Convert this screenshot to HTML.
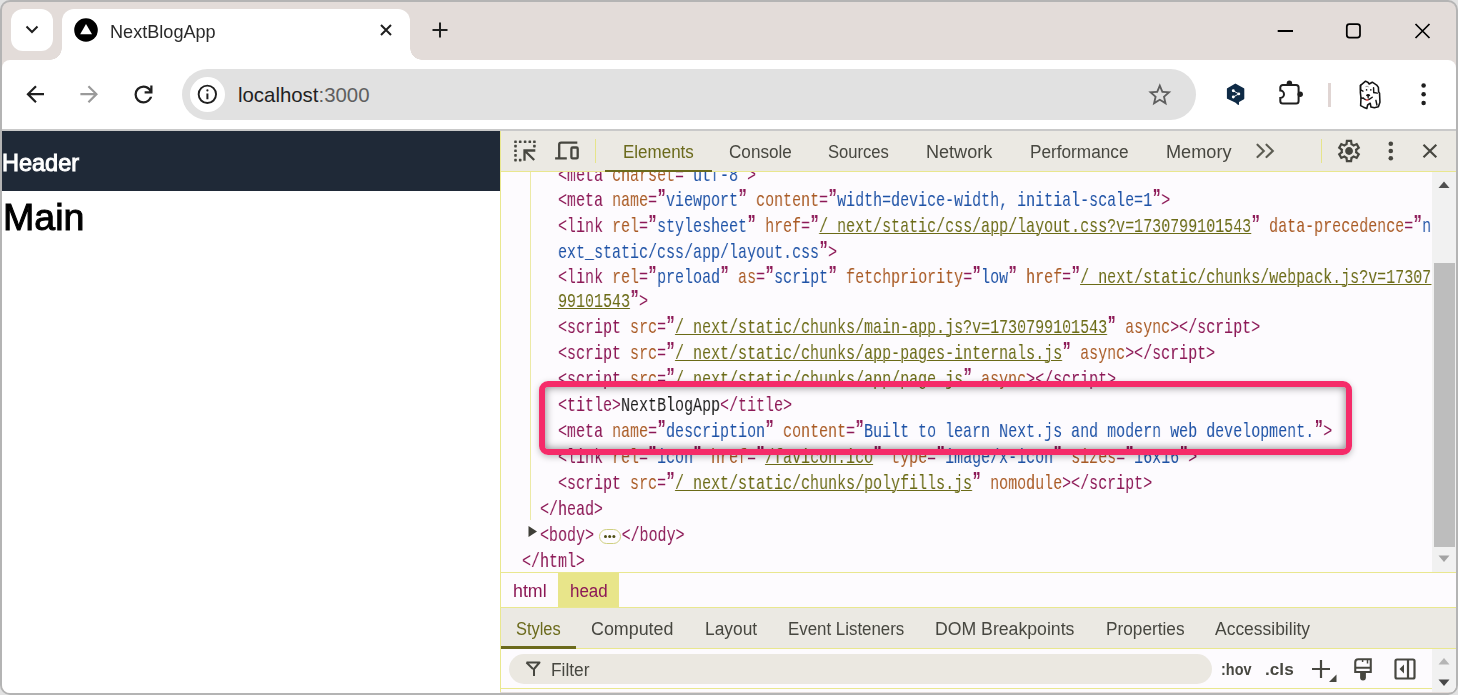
<!DOCTYPE html>
<html><head><meta charset="utf-8">
<style>
*{box-sizing:border-box;margin:0;padding:0}
html,body{width:1458px;height:695px;overflow:hidden;background:#e2e2e2;font-family:"Liberation Sans",sans-serif}
.a{position:absolute}
#win{position:absolute;left:2px;top:2px;width:1454px;height:691px;border-radius:8px;overflow:hidden;background:#e3dcd9}
svg{position:absolute;overflow:visible}
.tt{position:absolute;white-space:pre;line-height:1}
.lb{position:absolute;white-space:pre;line-height:1;transform-origin:0 0}
/* code */
#tree{position:absolute;left:501px;top:172px;width:931px;height:400px;background:#fdfbfe;overflow:hidden}
.ln{position:absolute;left:0;height:26px;will-change:transform;white-space:pre;font-family:"Liberation Mono",monospace;font-size:21px;line-height:26px;transform:scaleX(0.7143);transform-origin:0 0}
.tg{color:#8c1856}.an{color:#a95a24}.av{color:#1e52a6}.lk{color:#6b6b17;text-decoration:underline;text-decoration-thickness:1px;text-underline-offset:0.5px}.tx{color:#1c1c1c}
.q{font-weight:bold;font-family:"Liberation Sans",sans-serif;display:inline-block;width:12.6px;text-align:center;font-size:23px;line-height:0}
.el{display:inline-block;width:38.5px;height:1px}
</style></head><body>
<div class="a" style="left:0;top:0;width:1458px;height:695px;border-radius:10px;background:#b4b4b4"></div>
<div id="win">
  <!-- tab strip -->
  <div class="a" style="left:9px;top:7px;width:42px;height:42px;border-radius:12px;background:#fff"></div>
  <svg style="left:18px;top:18px" width="24" height="24"><path d="M6.5 6.5 L12 12 L17.5 6.5" fill="none" stroke="#1f1f1f" stroke-width="2"/></svg>
  <div class="a" style="left:60px;top:7px;width:348px;height:60px;border-radius:12px 12px 0 0;background:#fff"></div>
  <div class="a" style="left:48px;top:46px;width:12px;height:12px;background:radial-gradient(circle at 0 0,#e3dcd9 11.5px,#fff 12px)"></div>
  <div class="a" style="left:408px;top:46px;width:12px;height:12px;background:radial-gradient(circle at 100% 0,#e3dcd9 11.5px,#fff 12px)"></div>
  <svg style="left:72px;top:16px" width="24" height="24"><circle cx="12" cy="12" r="11.8" fill="#000"/><path d="M12 5.9 L18 16.2 L6.2 16.2 Z" fill="#fff"/></svg>
  <svg style="left:372px;top:16px" width="24" height="24"><path d="M7 7 L17 17 M17 7 L7 17" stroke="#1f1f1f" stroke-width="2"/></svg>
  <svg style="left:426px;top:16px" width="24" height="24"><path d="M12 4.5 V19.5 M4.5 12 H19.5" stroke="#1f1f1f" stroke-width="2"/></svg>
  <!-- window controls -->
  <svg style="left:1268px;top:16px" width="30" height="30"><path d="M7.7 13 H23" stroke="#000" stroke-width="1.8"/></svg>
  <svg style="left:1338px;top:16px" width="30" height="30"><rect x="6.8" y="6.2" width="13.2" height="13.3" rx="2.6" fill="none" stroke="#000" stroke-width="1.75"/></svg>
  <svg style="left:1408px;top:16px" width="30" height="30"><path d="M5.5 6 L19.5 20 M19.5 6 L5.5 20" stroke="#000" stroke-width="1.75"/></svg>

  <!-- toolbar -->
  <div class="a" style="left:0;top:58px;width:1454px;height:71px;border-radius:8px 8px 0 0;background:#fff"></div>
  <svg style="left:19.8px;top:79px" width="26.4" height="26.4" viewBox="0 0 24 24"><path d="M20 11H7.83l5.59-5.59L12 4l-8 8 8 8 1.41-1.41L7.83 13H20v-2z" fill="#1f1f1f"/></svg>
  <svg style="left:73.8px;top:79px" width="26.4" height="26.4" viewBox="0 0 24 24"><path d="M12 4l-1.41 1.41L16.17 11H4v2h12.17l-5.58 5.59L12 20l8-8z" fill="#9a9a9a"/></svg>
  <svg style="left:127.5px;top:78.85px" width="27" height="27" viewBox="0 -960 960 960"><path d="M480-160q-134 0-227-93t-93-227q0-134 93-227t227-93q69 0 132 28.5T720-690v-110h80v280H520v-80h168q-32-56-87.5-88T480-720q-100 0-170 70t-70 170q0 100 70 170t170 70q77 0 139-44t87-116h84q-28 106-114 173t-196 67Z" fill="#1f1f1f"/></svg>
  <!-- omnibox -->
  <div class="a" style="left:180px;top:67px;width:1014px;height:51px;border-radius:26px;background:#e1e1e1"></div>
  <div class="a" style="left:188px;top:75px;width:35px;height:35px;border-radius:50%;background:#fff"></div>
  <svg style="left:185px;top:72px" width="44" height="44"><circle cx="20.35" cy="20.35" r="8.7" fill="none" stroke="#1f1f1f" stroke-width="1.9"/><path d="M20.4 19.4 V25.2" stroke="#1f1f1f" stroke-width="2"/><circle cx="20.4" cy="16.4" r="1.1" fill="#1f1f1f"/></svg>
  <div class="tt" style="left:236px;top:83px;font-size:20.4px;color:#1f1f1f">localhost<span style="color:#5f5f5f">:3000</span></div>
  <svg style="left:1144px;top:78.7px" width="27.6" height="27.6" viewBox="0 0 24 24"><path d="M22 9.24l-7.19-.62L12 2 9.19 8.63 2 9.24l5.46 4.73L5.82 21 12 17.27 18.18 21l-1.63-7.03L22 9.24zM12 15.4l-3.76 2.27 1-4.28-3.32-2.88 4.38-.38L12 6.1l1.71 4.04 4.38.38-3.32 2.88 1 4.28L12 15.4z" fill="#5f5f5f"/></svg>
  <!-- extensions -->
  <svg style="left:1222px;top:78px" width="26" height="28"><path d="M11.4 4.3 L19.6 8.9 V18.6 L14.3 21.6 L14.3 24.2 L12 22.2 L3.6 18.2 V8.9 Z" fill="#0f2b46" stroke="#0f2b46" stroke-width="1.4" stroke-linejoin="round"/><path d="M9.3 10.8 L14.8 13.9 L9.3 17" fill="none" stroke="#fff" stroke-width="0.9"/><circle cx="9.3" cy="10.8" r="1.45" fill="#fff"/><circle cx="14.8" cy="13.9" r="1.45" fill="#fff"/><circle cx="9.3" cy="17" r="1.45" fill="#fff"/></svg>
  <svg style="left:1274px;top:76px" width="30" height="30"><path d="M6.8 7 H20.1 A2.5 2.5 0 0 1 22.6 9.5 V22.9 A2.5 2.5 0 0 1 20.1 25.4 H6.8 A2.5 2.5 0 0 1 4.3 22.9 V19.9 A3.7 3.7 0 0 0 4.3 12.5 V9.5 A2.5 2.5 0 0 1 6.8 7 Z" fill="none" stroke="#1f1f1f" stroke-width="2"/><circle cx="13.4" cy="5.3" r="2.7" fill="#1f1f1f"/><circle cx="24.2" cy="16.2" r="2.7" fill="#1f1f1f"/></svg>
  <div class="a" style="left:1326px;top:81px;width:2.5px;height:24px;background:#e0d5d3"></div>
  <!-- dog avatar -->
  <svg style="left:1348px;top:74px" width="40" height="36" viewBox="0 0 772 695"><path d="M210 175 L300 100 L350 125 L370 155 L430 120 L515 175 L548 220 L552 305 L570 330 L578 505 L548 592 L470 612 L405 600 L390 525 L340 560 L325 628 L262 602 L205 572 L212 420 L200 320 L200 180 Z" fill="#fff" stroke="#141414" stroke-width="30" stroke-linejoin="round"/>
<path d="M205 180 L205 268 L250 292 M455 228 L458 320 L528 330 M212 425 L262 430 M500 470 L520 560" fill="none" stroke="#141414" stroke-width="28" stroke-linecap="round"/>
<path d="M300 205 Q330 190 360 210" fill="none" stroke="#9a9a9a" stroke-width="18"/>
<circle cx="320" cy="268" r="16" fill="#141414"/><circle cx="402" cy="268" r="16" fill="#141414"/>
<ellipse cx="350" cy="372" rx="36" ry="26" fill="#141414"/>
<path d="M350 390 V420 M255 430 Q330 500 430 410" fill="none" stroke="#141414" stroke-width="26" stroke-linecap="round"/>
<ellipse cx="330" cy="462" rx="32" ry="20" fill="#e06464"/></svg>
  <svg style="left:1410px;top:80px" width="20" height="28"><circle cx="11.6" cy="3.6" r="2.25" fill="#1f1f1f"/><circle cx="11.6" cy="12.3" r="2.25" fill="#1f1f1f"/><circle cx="11.6" cy="21" r="2.25" fill="#1f1f1f"/></svg>
  <div class="a" style="left:0;top:127px;width:1454px;height:2px;background:#c9c9c9"></div>

  <!-- page -->
  <div class="a" style="left:0;top:129px;width:498px;height:562px;background:#fff"></div>
  <div class="a" style="left:0;top:129px;width:498px;height:60px;background:#1f2937"></div>
</div>

<div class="a" style="left:0;top:0;width:1456px;height:693px;overflow:hidden;border-bottom-right-radius:8px">
<!-- devtools (body coords) -->
<div class="a" style="left:500px;top:131px;width:956px;height:561px;background:#fdfbfe;border-left:1px solid #e9e78f"></div>
<div class="a" style="left:501px;top:131px;width:955px;height:41px;background:#ebe9e3;border-bottom:1px solid #e9e78f"></div>
<!-- inspect icon -->
<div class="a" style="left:595px;top:139px;width:1px;height:24px;background:#e6e48a"></div>
<div class="a" style="left:605px;top:169.5px;width:107px;height:2.5px;background:#6b6a1c"></div>
<div class="a" style="left:1321px;top:139px;width:1px;height:24px;background:#e6e48a"></div>

<svg style="left:0;top:0" width="1458" height="695">
<rect x="514.2" y="140.4" width="2.6" height="2.6" rx="0.6" fill="#474740"/><rect x="518.9" y="140.4" width="2.6" height="2.6" rx="0.6" fill="#474740"/><rect x="523.8" y="140.4" width="2.6" height="2.6" rx="0.6" fill="#474740"/><rect x="528.5" y="140.4" width="2.6" height="2.6" rx="0.6" fill="#474740"/><rect x="533.1" y="140.4" width="2.6" height="2.6" rx="0.6" fill="#474740"/><rect x="514.2" y="144.8" width="2.6" height="2.6" rx="0.6" fill="#474740"/><rect x="514.2" y="149.4" width="2.6" height="2.6" rx="0.6" fill="#474740"/><rect x="514.2" y="154.1" width="2.6" height="2.6" rx="0.6" fill="#474740"/><rect x="514.2" y="158.8" width="2.6" height="2.6" rx="0.6" fill="#474740"/><rect x="533.1" y="144.8" width="2.6" height="2.6" rx="0.6" fill="#474740"/><rect x="518.9" y="158.8" width="2.6" height="2.6" rx="0.6" fill="#474740"/>
<path d="M524.5 160.7 V150.5 H535.3 M524.5 150.5 L534.2 160" fill="none" stroke="#474740" stroke-width="2.3"/>
<path d="M559.2 158.3 V144.6 Q559.2 142.6 561.2 142.6 H577.3 M555.1 158.3 H566.8" fill="none" stroke="#474740" stroke-width="2.3"/>
<rect x="571.4" y="147.5" width="6.3" height="10.9" rx="1.2" fill="none" stroke="#474740" stroke-width="2.3"/>
<path d="M1257.5 144.7 L1263.8 150.9 L1257.5 157.1 M1266.5 144.7 L1272.8 150.9 L1266.5 157.1" fill="none" stroke="#5c5c52" stroke-width="2.1" stroke-linecap="round"/>
<svg x="1335.6" y="137.6" width="26.8" height="26.8" viewBox="0 -960 960 960"><path d="m370-80-16-128q-13-5-24.5-12T307-235l-119 50L78-375l103-78q-1-7-1-13.5v-27q0-6.5 1-13.5L78-585l110-190 119 50q11-8 23-15t24-12l16-128h220l16 128q13 5 24.5 12t22.5 15l119-50 110 190-103 78q1 7 1 13.5v27q0 6.5-2 13.5l103 78-110 190-118-50q-11 8-23 15t-24 12L590-80H370Zm70-80h79l14-106q31-8 57.5-23.5T639-327l99 41 39-68-86-65q5-14 7-29.5t2-31.5q0-16-2-31.5t-7-29.5l86-65-39-68-99 42q-22-23-48.5-38.5T533-694l-13-106h-79l-14 106q-31 8-57.5 23.5T321-633l-99-41-39 68 86 64q-5 15-7 30t-2 32q0 16 2 31t7 30l-86 65 39 68 99-42q22 23 48.5 38.5T427-266l13 106Zm42-180q58 0 99-41t41-99q0-58-41-99t-99-41q-59 0-99.5 41T342-480q0 58 40.5 99t99.5 41Zm-2-140Z" fill="#474740"/></svg>
<circle cx="1390.8" cy="143.8" r="2.3" fill="#474740"/><circle cx="1390.8" cy="151" r="2.3" fill="#474740"/><circle cx="1390.8" cy="158.2" r="2.3" fill="#474740"/>
<path d="M1423.5 144.8 L1436.3 157.2 M1436.3 144.8 L1423.5 157.2" stroke="#474740" stroke-width="2.2"/>
</svg>
<!-- tree -->
<div id="tree">
  <div class="a" style="left:29px;top:0;width:1px;height:348px;background:#ece9a6"></div>
  <!--CODE--><div id="code" class="a" style="left:0;top:0;width:1000px;height:400px">
<div class="ln" style="left:57px;top:-9.30px"><span class="tg">&lt;meta</span><span class="tg"> </span><span class="an">charset</span><span class="tg">=<b class="q">”</b></span><span class="av">utf-8</span><span class="tg"><b class="q">”</b></span><span class="tg">&gt;</span></div>
<div class="ln" style="left:57px;top:16.40px"><span class="tg">&lt;meta</span><span class="tg"> </span><span class="an">name</span><span class="tg">=<b class="q">”</b></span><span class="av">viewport</span><span class="tg"><b class="q">”</b></span><span class="tg"> </span><span class="an">content</span><span class="tg">=<b class="q">”</b></span><span class="av">width=device-width, initial-scale=1</span><span class="tg"><b class="q">”</b></span><span class="tg">&gt;</span></div>
<div class="ln" style="left:57px;top:42.10px"><span class="tg">&lt;link</span><span class="tg"> </span><span class="an">rel</span><span class="tg">=<b class="q">”</b></span><span class="av">stylesheet</span><span class="tg"><b class="q">”</b></span><span class="tg"> </span><span class="an">href</span><span class="tg">=<b class="q">”</b></span><span class="lk">/_next/static/css/app/layout.css?v=1730799101543</span><span class="tg"><b class="q">”</b></span><span class="tg"> </span><span class="an">data-precedence</span><span class="tg">=<b class="q">”</b></span><span class="av">n</span></div>
<div class="ln" style="left:57px;top:67.50px"><span class="av">ext_static/css/app/layout.css</span><span class="tg"><b class="q">”</b>&gt;</span></div>
<div class="ln" style="left:57px;top:93.20px"><span class="tg">&lt;link</span><span class="tg"> </span><span class="an">rel</span><span class="tg">=<b class="q">”</b></span><span class="av">preload</span><span class="tg"><b class="q">”</b></span><span class="tg"> </span><span class="an">as</span><span class="tg">=<b class="q">”</b></span><span class="av">script</span><span class="tg"><b class="q">”</b></span><span class="tg"> </span><span class="an">fetchpriority</span><span class="tg">=<b class="q">”</b></span><span class="av">low</span><span class="tg"><b class="q">”</b></span><span class="tg"> </span><span class="an">href</span><span class="tg">=<b class="q">”</b></span><span class="lk">/_next/static/chunks/webpack.js?v=17307</span></div>
<div class="ln" style="left:57px;top:117.40px"><span class="lk">99101543</span><span class="tg"><b class="q">”</b>&gt;</span></div>
<div class="ln" style="left:57px;top:143.20px"><span class="tg">&lt;script</span><span class="tg"> </span><span class="an">src</span><span class="tg">=<b class="q">”</b></span><span class="lk">/_next/static/chunks/main-app.js?v=1730799101543</span><span class="tg"><b class="q">”</b></span><span class="tg"> </span><span class="an">async</span><span class="tg">&gt;&lt;/script&gt;</span></div>
<div class="ln" style="left:57px;top:169.20px"><span class="tg">&lt;script</span><span class="tg"> </span><span class="an">src</span><span class="tg">=<b class="q">”</b></span><span class="lk">/_next/static/chunks/app-pages-internals.js</span><span class="tg"><b class="q">”</b></span><span class="tg"> </span><span class="an">async</span><span class="tg">&gt;&lt;/script&gt;</span></div>
<div class="ln" style="left:57px;top:195.00px"><span class="tg">&lt;script</span><span class="tg"> </span><span class="an">src</span><span class="tg">=<b class="q">”</b></span><span class="lk">/_next/static/chunks/app/page.js</span><span class="tg"><b class="q">”</b></span><span class="tg"> </span><span class="an">async</span><span class="tg">&gt;&lt;/script&gt;</span></div>
<div class="ln" style="left:57px;top:221.40px"><span class="tg">&lt;title&gt;</span><span class="tx">NextBlogApp</span><span class="tg">&lt;/title&gt;</span></div>
<div class="ln" style="left:57px;top:247.20px"><span class="tg">&lt;meta</span><span class="tg"> </span><span class="an">name</span><span class="tg">=<b class="q">”</b></span><span class="av">description</span><span class="tg"><b class="q">”</b></span><span class="tg"> </span><span class="an">content</span><span class="tg">=<b class="q">”</b></span><span class="av">Built to learn Next.js and modern web development.</span><span class="tg"><b class="q">”</b></span><span class="tg">&gt;</span></div>
<div class="ln" style="left:57px;top:273.40px"><span class="tg">&lt;link</span><span class="tg"> </span><span class="an">rel</span><span class="tg">=<b class="q">”</b></span><span class="av">icon</span><span class="tg"><b class="q">”</b></span><span class="tg"> </span><span class="an">href</span><span class="tg">=<b class="q">”</b></span><span class="lk">/favicon.ico</span><span class="tg"><b class="q">”</b></span><span class="tg"> </span><span class="an">type</span><span class="tg">=<b class="q">”</b></span><span class="av">image/x-icon</span><span class="tg"><b class="q">”</b></span><span class="tg"> </span><span class="an">sizes</span><span class="tg">=<b class="q">”</b></span><span class="av">16x16</span><span class="tg"><b class="q">”</b>&gt;</span></div>
<div class="ln" style="left:57px;top:299.20px"><span class="tg">&lt;script</span><span class="tg"> </span><span class="an">src</span><span class="tg">=<b class="q">”</b></span><span class="lk">/_next/static/chunks/polyfills.js</span><span class="tg"><b class="q">”</b></span><span class="tg"> </span><span class="an">nomodule</span><span class="tg">&gt;&lt;/script&gt;</span></div>
<div class="ln" style="left:39px;top:325.30px"><span class="tg">&lt;/head&gt;</span></div>
<div class="ln" style="left:39px;top:351.30px"><span class="tg">&lt;body&gt;</span><span class="el"></span><span class="tg">&lt;/body&gt;</span></div>
<div class="ln" style="left:21px;top:377.00px"><span class="tg">&lt;/html&gt;</span></div>
</div><!--/CODE-->
</div>
<!-- body triangle -->
<div class="a" style="left:599px;top:529px;width:21.5px;height:15px;border:1px solid #cfcf80;border-radius:8px"></div>
<div class="a" style="left:604.2px;top:535.3px;width:3.2px;height:3.2px;border-radius:50%;background:#4f4e14;box-shadow:4.2px 0 0 #4f4e14,8.4px 0 0 #4f4e14"></div>
<svg style="left:527px;top:525px" width="12" height="14"><path d="M1.5 1 L10 6.5 L1.5 12 Z" fill="#3f3f38"/></svg>
<!-- highlight box -->
<div class="a" style="left:539px;top:380.5px;width:813px;height:74px;border:6px solid #f52b69;border-radius:9px;box-shadow:inset 0 0 8px rgba(0,0,0,0.5),0 2px 6px rgba(0,0,0,0.25)"></div>
<!-- scrollbar -->
<div class="a" style="left:1432px;top:172px;width:24px;height:400px;background:#f1f1f1"></div>
<svg style="left:1437px;top:178px" width="14" height="12"><path d="M1.5 10 L7 3.5 L12.5 10 Z" fill="#505050"/></svg>
<div class="a" style="left:1434px;top:263px;width:21px;height:284px;background:#bdbdbd"></div>
<svg style="left:1437px;top:552px" width="14" height="12"><path d="M1.5 3.5 L7 10 L12.5 3.5 Z" fill="#a3a3a3"/></svg>

<!-- breadcrumb -->
<div class="a" style="left:501px;top:572px;width:955px;height:1px;background:#e9e78f"></div>
<div class="a" style="left:558px;top:573px;width:61px;height:34px;background:#e8e58a"></div>
<div class="a" style="left:501px;top:607px;width:955px;height:42px;background:#ebe9e3;border-top:1px solid #e9e78f;border-bottom:1px solid #e9e78f"></div>
<div class="a" style="left:501px;top:646px;width:75px;height:2.5px;background:#6b6a1c"></div>
<!-- filter -->
<div class="a" style="left:509px;top:654px;width:703px;height:30px;border-radius:15px;background:#ebe8e1"></div>
<svg style="left:524px;top:660px" width="18" height="18"><path d="M2.5 2.5 H15.5 L10 9 V16" fill="none" stroke="#474740" stroke-width="2" stroke-linejoin="round"/><path d="M2.5 2.5 L9 9" fill="none" stroke="#474740" stroke-width="2"/></svg>
<svg style="left:1309px;top:657px" width="30" height="28"><path d="M12 3 V21 M3 12 H21" stroke="#474740" stroke-width="2.2"/><path d="M27.5 17.5 V25 H20 Z" fill="#474740"/></svg>
<svg style="left:0;top:0" width="1458" height="695"><path d="M1355.25 671.95 V662.25 Q1355.25 659.25 1358.25 659.25 H1370.75 V671.95 Z M1355.25 667.8 H1370.75" fill="none" stroke="#474740" stroke-width="2.1"/><path d="M1362.6 659.5 V662 M1367.5 659.5 V663.5" stroke="#474740" stroke-width="1.5"/><path d="M1360.1 672 H1365.9 V677.5 A2.9 2.9 0 0 1 1360.1 677.5 Z" fill="#474740"/></svg>
<svg style="left:1392px;top:656px" width="26" height="26"><rect x="3.5" y="3.5" width="19" height="19" rx="1.5" fill="none" stroke="#474740" stroke-width="2.2"/><path d="M16 3.5 V22.5" stroke="#474740" stroke-width="2.2"/><path d="M12 8.5 L7.5 13 L12 17.5 Z" fill="#474740"/></svg>
<div class="a" style="left:1432px;top:649px;width:24px;height:43px;background:#f1f1f1"></div>
<svg style="left:1437px;top:655px" width="14" height="12"><path d="M1.5 9.5 L7 3 L12.5 9.5 Z" fill="#b5b5b5"/></svg>
<svg style="left:1437px;top:677px" width="14" height="12"><path d="M1.5 2.5 L7 9 L12.5 2.5 Z" fill="#474747"/></svg>
<div class="a" style="left:501px;top:688px;width:931px;height:1px;background:#e9e78f"></div>
</div>
<!--LABELS-->
<div class="lb" style="left:110.20px;top:23.65px;font-size:17.9px;font-weight:normal;color:#2a2a2a;transform:scaleX(1.0117)">NextBlogApp</div>
<div class="lb" style="left:622.50px;top:143.00px;font-size:18px;font-weight:normal;color:#6b6a1c;transform:scaleX(0.9437)">Elements</div>
<div class="lb" style="left:728.80px;top:143.00px;font-size:18px;font-weight:normal;color:#474740;transform:scaleX(0.9509)">Console</div>
<div class="lb" style="left:828.00px;top:143.00px;font-size:18px;font-weight:normal;color:#474740;transform:scaleX(0.9224)">Sources</div>
<div class="lb" style="left:925.90px;top:143.00px;font-size:18px;font-weight:normal;color:#474740;transform:scaleX(1.0036)">Network</div>
<div class="lb" style="left:1029.70px;top:143.00px;font-size:18px;font-weight:normal;color:#474740;transform:scaleX(0.9558)">Performance</div>
<div class="lb" style="left:1165.80px;top:143.00px;font-size:18px;font-weight:normal;color:#474740;transform:scaleX(1.0077)">Memory</div>
<div class="lb" style="left:513.00px;top:581.80px;font-size:18px;font-weight:normal;color:#8c1856;transform:scaleX(0.9882)">html</div>
<div class="lb" style="left:569.50px;top:581.80px;font-size:18px;font-weight:normal;color:#8c1856;transform:scaleX(0.9413)">head</div>
<div class="lb" style="left:516.00px;top:619.70px;font-size:18px;font-weight:normal;color:#6b6a1c;transform:scaleX(0.9120)">Styles</div>
<div class="lb" style="left:591.00px;top:619.70px;font-size:18px;font-weight:normal;color:#474740;transform:scaleX(0.9921)">Computed</div>
<div class="lb" style="left:705.20px;top:619.70px;font-size:18px;font-weight:normal;color:#474740;transform:scaleX(0.9642)">Layout</div>
<div class="lb" style="left:787.70px;top:619.70px;font-size:18px;font-weight:normal;color:#474740;transform:scaleX(0.9373)">Event Listeners</div>
<div class="lb" style="left:934.70px;top:619.70px;font-size:18px;font-weight:normal;color:#474740;transform:scaleX(0.9813)">DOM Breakpoints</div>
<div class="lb" style="left:1106.00px;top:619.70px;font-size:18px;font-weight:normal;color:#474740;transform:scaleX(0.9568)">Properties</div>
<div class="lb" style="left:1215.10px;top:619.70px;font-size:18px;font-weight:normal;color:#474740;transform:scaleX(0.9701)">Accessibility</div>
<div class="lb" style="left:551.20px;top:661.00px;font-size:18px;font-weight:normal;color:#474740;transform:scaleX(0.9626)">Filter</div>
<div class="lb" style="left:1221.20px;top:661.20px;font-size:17px;font-weight:bold;color:#474740;transform:scaleX(0.8499)">:hov</div>
<div class="lb" style="left:1264.60px;top:661.20px;font-size:17px;font-weight:bold;color:#474740;transform:scaleX(1.0121)">.cls</div>
<div class="lb" style="left:2.30px;top:151.25px;font-size:23.9px;font-weight:normal;color:#fff;-webkit-text-stroke:1.0px #fff;transform:scaleX(0.9835)">Header</div>
<div class="lb" style="left:2.70px;top:200.15px;font-size:36.7px;font-weight:normal;color:#000;-webkit-text-stroke:1.0px #000;transform:scaleX(1.0243)">Main</div>
<!--/LABELS-->
</body></html>
